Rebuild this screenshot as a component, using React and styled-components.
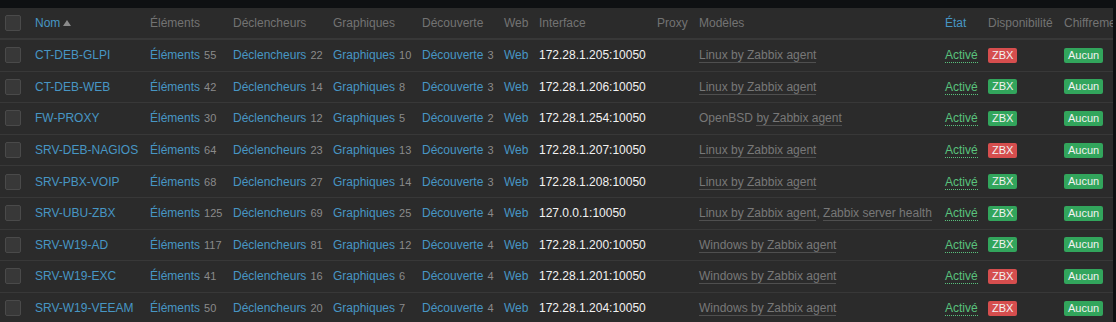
import React from "react";
import styled, { createGlobalStyle } from "styled-components";

const Global = createGlobalStyle`
  html, body { margin: 0; padding: 0; background: #0e1012; }
  body { font-family: "Liberation Sans", Arial, sans-serif; font-size: 12px; }
`;

const Wrap = styled.div`
  margin-top: 8px;
  width: 1113px;
  overflow: hidden;
  background: #2b2b2b;
`;

const Table = styled.table`
  width: 1160px;
  table-layout: fixed;
  border-collapse: collapse;
  color: #f2f2f2;
  font-size: 12px;
  line-height: 14px;
`;

const Th = styled.th`
  text-align: left;
  font-weight: normal;
  color: ${(p) => (p.$active ? "#4796c4" : "#737373")};
  padding: 0 5px;
  height: 30px;
  white-space: nowrap;
  overflow: hidden;
  border-bottom: 2px solid #383838;
`;

const Tr = styled.tr`
  border-bottom: 1px solid #383838;
`;

const Td = styled.td`
  padding: 0 5px;
  height: 30.6px;
  white-space: nowrap;
  overflow: hidden;
  vertical-align: middle;
`;

const Check = styled.span`
  display: inline-block;
  width: 14px;
  height: 14px;
  border: 1px solid #4a4a4a;
  background: #383838;
  border-radius: 2px;
  vertical-align: middle;
`;

const Link = styled.a`
  color: #4796c4;
  text-decoration: none;
`;

const Count = styled.sup`
  color: #8a8a8a;
  font-size: 11px;
  vertical-align: baseline;
  margin-left: 4px;
`;

const Arrow = styled.span`
  display: inline-block;
  width: 0;
  height: 0;
  margin-left: 3px;
  border-left: 4px solid transparent;
  border-right: 4px solid transparent;
  border-bottom: 6px solid #8a8a8a;
  vertical-align: 1px;
`;

const Tpl = styled.span`
  color: #787878;
  border-bottom: 1px solid #4f4f4f;
`;

const Plain = styled.span`
  color: #787878;
`;

const Sep = styled.span`
  color: #787878;
`;

const Status = styled.span`
  color: #59c27d;
  border-bottom: 1px dotted #59c27d;
`;

const Badge = styled.span`
  display: inline-block;
  padding: 0 4px;
  line-height: 15px;
  border-radius: 2px;
  color: #f2f2f2;
  font-size: 11px;
  background: ${(p) => (p.$red ? "#d64e4e" : "#32a55c")};
`;

const cols = [30, 115, 83, 100, 89, 82, 35, 118, 42, 246, 43, 76, 101];

const hosts = [
  ["CT-DEB-GLPI", 55, 22, 10, 3, "172.28.1.205:10050", [["Linux by Zabbix agent"]], true],
  ["CT-DEB-WEB", 42, 14, 8, 3, "172.28.1.206:10050", [["Linux by Zabbix agent"]], false],
  ["FW-PROXY", 30, 12, 5, 2, "172.28.1.254:10050", "openbsd", false],
  ["SRV-DEB-NAGIOS", 64, 23, 13, 3, "172.28.1.207:10050", [["Linux by Zabbix agent"]], true],
  ["SRV-PBX-VOIP", 68, 27, 14, 3, "172.28.1.208:10050", [["Linux by Zabbix agent"]], false],
  ["SRV-UBU-ZBX", 125, 69, 25, 4, "127.0.0.1:10050", [["Linux by Zabbix agent"], ["Zabbix server health"]], false],
  ["SRV-W19-AD", 117, 81, 12, 4, "172.28.1.200:10050", [["Windows by Zabbix agent"]], false],
  ["SRV-W19-EXC", 41, 16, 6, 4, "172.28.1.201:10050", [["Windows by Zabbix agent"]], true],
  ["SRV-W19-VEEAM", 50, 20, 7, 4, "172.28.1.204:10050", [["Windows by Zabbix agent"]], true],
];

function Templates({ t }) {
  if (t === "openbsd") {
    return (
      <>
        <Plain>OpenBSD </Plain>
        <Tpl>by Zabbix agent</Tpl>
      </>
    );
  }
  return t.map((x, i) => (
    <React.Fragment key={i}>
      {i > 0 && <Sep>, </Sep>}
      <Tpl>{x[0]}</Tpl>
    </React.Fragment>
  ));
}

export default function App() {
  return (
    <>
      <Global />
      <Wrap>
        <Table>
          <colgroup>
            {cols.map((w, i) => (
              <col key={i} style={{ width: w }} />
            ))}
          </colgroup>
          <thead>
            <tr>
              <Th><Check /></Th>
              <Th $active>Nom<Arrow /></Th>
              <Th>Éléments</Th>
              <Th>Déclencheurs</Th>
              <Th>Graphiques</Th>
              <Th>Découverte</Th>
              <Th>Web</Th>
              <Th>Interface</Th>
              <Th>Proxy</Th>
              <Th>Modèles</Th>
              <Th $active>État</Th>
              <Th>Disponibilité</Th>
              <Th>Chiffrement</Th>
            </tr>
          </thead>
          <tbody>
            {hosts.map(([name, it, tr, gr, dc, ip, tpl, red]) => (
              <Tr key={name}>
                <Td><Check /></Td>
                <Td><Link>{name}</Link></Td>
                <Td><Link>Éléments</Link><Count>{it}</Count></Td>
                <Td><Link>Déclencheurs</Link><Count>{tr}</Count></Td>
                <Td><Link>Graphiques</Link><Count>{gr}</Count></Td>
                <Td><Link>Découverte</Link><Count>{dc}</Count></Td>
                <Td><Link>Web</Link></Td>
                <Td>{ip}</Td>
                <Td></Td>
                <Td><Templates t={tpl} /></Td>
                <Td><Status>Activé</Status></Td>
                <Td><Badge $red={red}>ZBX</Badge></Td>
                <Td><Badge>Aucun</Badge></Td>
              </Tr>
            ))}
          </tbody>
        </Table>
      </Wrap>
    </>
  );
}
